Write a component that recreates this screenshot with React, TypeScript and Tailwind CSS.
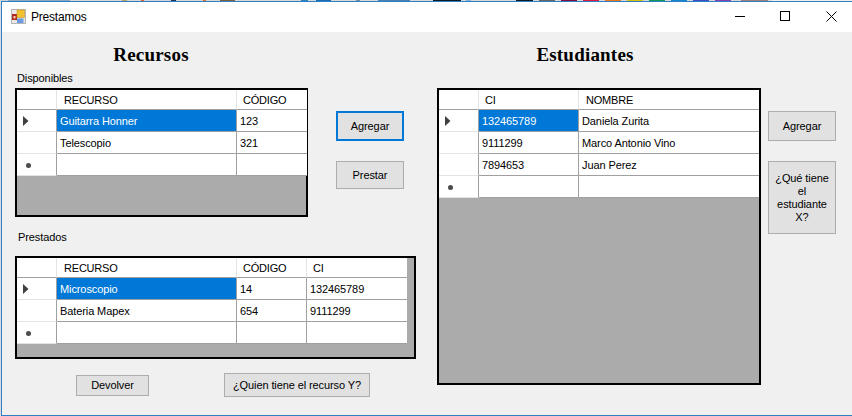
const FONT = "font-['Liberation_Sans',Arial,sans-serif]";

type Column = { title: string; width: string; headerPad: string };

interface GridProps {
  outer: string;
  columns: Column[];
  rows: string[][];
  selected: number;
}

function RowHeader({ kind }: { kind: 'current' | 'new' | 'none' }) {
  return (
    <div className="w-[40px] shrink-0 h-[22px] border-r border-r-[#a0a0a0] border-b border-b-[#e3e3e3] bg-white flex items-center pl-[6px]">
      {kind === 'current' && (
        <svg width="6" height="10" viewBox="0 0 6 10" className="mt-[1px]">
          <path d="M0 0 L5.5 5 L0 10 Z" fill="#404040" />
        </svg>
      )}
      {kind === 'new' && (
        <span className="block ml-[3px] mt-[2px] w-[5px] h-[5px] rounded-full bg-[#4a4a4a]" />
      )}
    </div>
  );
}

function DataGrid({ outer, columns, rows, selected }: GridProps) {
  return (
    <div className={`border-2 border-black bg-[#ababab] ${outer}`}>
      <div className="flex w-fit h-[20px] bg-white">
        <div className="w-[40px] border-r border-r-[#e3e3e3] border-b border-b-[#a0a0a0]" />
        {columns.map((c) => (
          <div
            key={c.title}
            className={`${c.width} ${c.headerPad} border-r border-r-[#e3e3e3] last:border-r-0 border-b border-b-[#a0a0a0] text-[11px] leading-[20px] tracking-[-0.2px] text-black`}
          >
            {c.title}
          </div>
        ))}
      </div>
      {[...rows, columns.map(() => '')].map((row, i) => (
        <div key={i} className="flex w-fit">
          <RowHeader kind={i === selected ? 'current' : i === rows.length ? 'new' : 'none'} />
          {row.map((cell, j) => (
            <div
              key={j}
              className={`${columns[j].width} h-[22px] pl-[3px] border-r border-r-[#a0a0a0] last:border-r-0 border-b border-b-[#a0a0a0] text-[11px] leading-[22px] tracking-[-0.1px] ${
                i === selected && j === 0 ? 'bg-[#0078d7] text-white' : 'bg-white text-black'
              }`}
            >
              {cell}
            </div>
          ))}
        </div>
      ))}
    </div>
  );
}

function WinButton({ label, className }: { label: string; className: string }) {
  return (
    <button
      className={`bg-[#e1e1e1] text-[11px] leading-[13px] tracking-[-0.1px] text-black flex items-center justify-center text-center ${className}`}
    >
      {label}
    </button>
  );
}

// desktop peeking out above the window
const STRIP = [
  'w-[8px] bg-[#c8d0d8]', 'w-[62px] bg-[#8aa8c4]', 'w-[52px] bg-[#d8d8d8]', 'w-[5px] bg-[#c0a060]',
  'w-[14px] bg-[#d8d8d8]', 'w-[3px] bg-[#e0652a]', 'w-[27px] bg-[#d0d4d8]', 'w-[5px] bg-[#1d3450]',
  'w-[27px] bg-[#d8d8d8]', 'w-[3px] bg-[#e0702a]', 'w-[14px] bg-[#d8d8d8]', 'w-[15px] bg-[#7a6038]',
  'w-[66px] bg-[#d8d8d8]', 'w-[7px] bg-[#2f7fb8]', 'w-[8px] bg-[#d8d8d8]', 'w-[15px] bg-[#1a6cb0]',
  'w-[25px] bg-[#d8d8d8]', 'w-[4px] bg-[#7a8ca0]', 'w-[18px] bg-[#d8d8d8]', 'w-[32px] bg-[#4a7fb0]',
  'w-[23px] bg-[#d8d8d8]', 'w-[28px] bg-[#0d1a24]', 'w-[5px] bg-[#d8d8d8]', 'w-[5px] bg-[#7fb0e0]',
  'w-[45px] bg-[#d8d8d8]', 'w-[17px] bg-[#0d1a24]', 'w-[6px] bg-[#d8d8d8]', 'w-[16px] bg-[#666666]',
  'w-[6px] bg-[#d8d8d8]', 'w-[16px] bg-[#7c0d3c]', 'w-[6px] bg-[#d8d8d8]', 'w-[16px] bg-[#d81e3c]',
  'w-[6px] bg-[#d8d8d8]', 'w-[16px] bg-[#e8781e]', 'w-[6px] bg-[#d8d8d8]', 'w-[16px] bg-[#d8c010]',
  'w-[6px] bg-[#d8d8d8]', 'w-[16px] bg-[#129a50]', 'w-[6px] bg-[#d8d8d8]', 'w-[16px] bg-[#1088d0]',
  'w-[6px] bg-[#d8d8d8]', 'w-[16px] bg-[#3a4fc0]', 'w-[6px] bg-[#d8d8d8]', 'w-[16px] bg-[#8a3fb0]',
  'w-[10px] bg-[#d8d8d8]', 'w-[27px] bg-[#a0807a]', 'w-[4px] bg-[#d8d8d8]',
];

export default function App() {
  return (
    <div className={`w-[852px] h-[416px] overflow-hidden flex flex-col bg-[#f0f0f0] ${FONT}`}>
      <div className="flex h-[1px] shrink-0">
        {STRIP.map((seg, i) => (
          <div key={i} className={seg} />
        ))}
      </div>
      <div className="flex-1 flex pl-[1px] bg-[#d8dce0]">
        <div className="flex-1 flex flex-col border-l border-t border-b border-[#2f7fc4] bg-[#f0f0f0]">
          {/* Title bar */}
          <div className="h-[30px] shrink-0 bg-white flex items-center">
            <svg width="15" height="15" viewBox="0 0 15 15" className="ml-[9px] mr-[5px] mb-[1px]">
              <rect x="0.5" y="0.5" width="14" height="14" fill="#e8e8e8" stroke="#b5b5b5" />
              <rect x="1" y="5" width="5" height="6" fill="#b02a1a" />
              <rect x="2.5" y="7" width="2" height="2.5" fill="#f4d0c0" />
              <rect x="6" y="1" width="7.5" height="7.5" fill="#f2c230" stroke="#c89a20" strokeWidth="0.6" />
              <rect x="6" y="9.5" width="6.5" height="4.5" fill="#6c9ae0" />
            </svg>
            <span className="text-[12px] tracking-[-0.2px] text-black">Prestamos</span>
            <div className="ml-auto flex items-center mb-[1px]">
              <svg width="11" height="11" viewBox="0 0 11 11" className="mr-[34px]">
                <path d="M0 5.5 H10" stroke="#000" strokeWidth="1" />
              </svg>
              <svg width="11" height="11" viewBox="0 0 11 11" className="mr-[35px]">
                <rect x="0.5" y="0.5" width="9" height="9" fill="none" stroke="#000" />
              </svg>
              <svg width="11" height="11" viewBox="0 0 11 11" className="mr-[15px]">
                <path d="M0.5 0.5 L10.5 10.5 M10.5 0.5 L0.5 10.5" stroke="#000" strokeWidth="1" />
              </svg>
            </div>
          </div>

          {/* Form */}
          <div className="flex-1 flex pl-[13px]">
            <div className="w-[402px] shrink-0 flex flex-col">
              <div className="flex">
                <div className="w-[293px] shrink-0">
                  <h1 className="mt-[10px] h-[28px] pr-[21px] text-center font-['Liberation_Serif',serif] font-bold text-[19px] leading-[26px] tracking-[0.2px] text-black">
                    Recursos
                  </h1>
                  <p className="h-[18px] pl-[2px] text-[11px] leading-[16px] tracking-[-0.1px] text-black">Disponibles</p>
                  <DataGrid
                    outer="w-[293px] h-[129px]"
                    selected={0}
                    columns={[
                      { title: 'RECURSO', width: 'w-[180px]', headerPad: 'pl-[7px]' },
                      { title: 'CÓDIGO', width: 'w-[70px]', headerPad: 'pl-[6px]' },
                    ]}
                    rows={[
                      ['Guitarra Honner', '123'],
                      ['Telescopio', '321'],
                    ]}
                  />
                </div>
                <div className="ml-[28px] pt-[79px] flex flex-col gap-[20px]">
                  <WinButton label="Agregar" className="w-[68px] h-[30px] border-2 border-[#0078d7]" />
                  <WinButton label="Prestar" className="w-[68px] h-[28px] border border-[#adadad]" />
                </div>
              </div>
              <p className="mt-[12px] h-[27px] pl-[3px] text-[11px] leading-[16px] tracking-[-0.1px] text-black">Prestados</p>
              <DataGrid
                outer="w-[401px] h-[103px]"
                selected={0}
                columns={[
                  { title: 'RECURSO', width: 'w-[180px]', headerPad: 'pl-[7px]' },
                  { title: 'CÓDIGO', width: 'w-[70px]', headerPad: 'pl-[6px]' },
                  { title: 'CI', width: 'w-[100px]', headerPad: 'pl-[6px]' },
                ]}
                rows={[
                  ['Microscopio', '14', '132465789'],
                  ['Bateria Mapex', '654', '9111299'],
                ]}
              />
              <div className="flex items-center mt-[14px]">
                <WinButton label="Devolver" className="ml-[61px] w-[73px] h-[21px] border border-[#adadad]" />
                <WinButton label="¿Quien tiene el recurso Y?" className="ml-[75px] w-[146px] h-[24px] border border-[#adadad]" />
              </div>
            </div>

            <div className="ml-[20px] w-[324px] shrink-0">
              <h1 className="mt-[10px] h-[46px] pr-[28px] text-center font-['Liberation_Serif',serif] font-bold text-[19px] leading-[26px] tracking-[0.2px] text-black">
                Estudiantes
              </h1>
              <DataGrid
                outer="w-[324px] h-[297px]"
                selected={0}
                columns={[
                  { title: 'CI', width: 'w-[100px]', headerPad: 'pl-[6px]' },
                  { title: 'NOMBRE', width: 'w-[180px]', headerPad: 'pl-[7px]' },
                ]}
                rows={[
                  ['132465789', 'Daniela Zurita'],
                  ['9111299', 'Marco Antonio Vino'],
                  ['7894653', 'Juan Perez'],
                ]}
              />
            </div>

            <div className="ml-[7px] pt-[79px] flex flex-col gap-[20px]">
              <WinButton label="Agregar" className="w-[68px] h-[30px] border border-[#adadad]" />
              <WinButton label="¿Qué tiene el estudiante X?" className="w-[68px] h-[73px] border border-[#adadad] px-[4px]" />
            </div>
          </div>
        </div>
      </div>
    </div>
  );
}
